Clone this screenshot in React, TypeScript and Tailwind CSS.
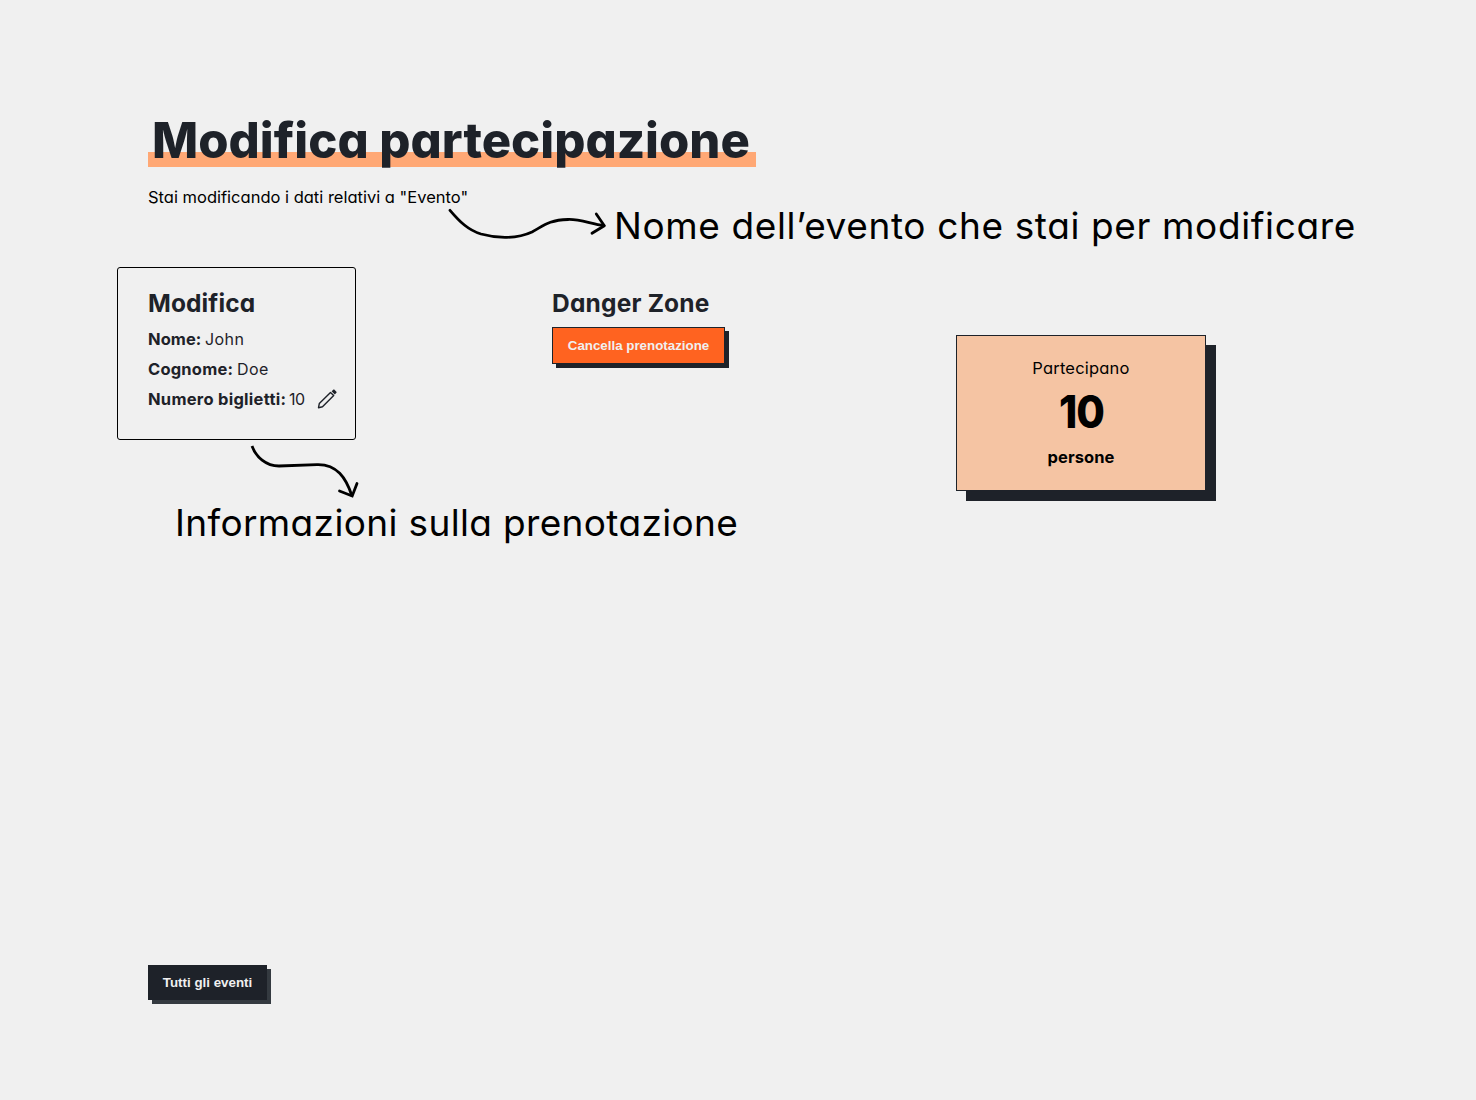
import type { ReactNode } from "react";

function Row({ label, labelClass, children }: { label: string; labelClass: string; children: ReactNode }) {
  return (
    <div className="flex h-6 items-center leading-6 text-[#1e2229]">
      <span className={labelClass}>{label}</span>
      {children}
    </div>
  );
}

function Pencil() {
  return (
    <svg width="20" height="20" viewBox="0 0 20 20" className="ml-[13px]" fill="none" stroke="#1e2229">
      <path
        d="M1.5 18.7L2.3 14.6L13.5 3.4L16.7 6.6L5.5 17.8L1.5 18.7Z"
        strokeWidth="1.4"
        strokeLinejoin="round"
      />
      <path
        d="M14.6 2.3L16 0.9C16.5 0.4 17.2 0.4 17.7 0.9L19.2 2.4C19.7 2.9 19.7 3.6 19.2 4.1L17.8 5.5Z"
        fill="#1e2229"
        stroke="none"
      />
    </svg>
  );
}

export default function App() {
  return (
    <div className="relative flex h-[1100px] w-[1476px] flex-col items-start overflow-hidden bg-[#f0f0f0] px-[148px] pt-[105px] pb-[100px] font-['Inter',sans-serif] text-base text-black [font-feature-settings:'cv11']">
      <h1 className="h-[72px] w-[608px] bg-[linear-gradient(#ffa875,#ffa875)] bg-[length:100%_15px] bg-[position:0_47px] bg-no-repeat pl-[4px] text-[49px] leading-[71px] font-extrabold whitespace-nowrap text-[#1e2229]">
        Modifica partecipazione
      </h1>
      <p className="mt-2 text-[16.5px] leading-6">Stai modificando i dati relativi a "Evento"</p>

      <main className="mt-[75px] grid grid-cols-[404px_404px_260px] items-start">
        <section>
          <h2 className="pt-px text-[24.5px] leading-9 font-bold tracking-[0.1px] text-[#1e2229]">Modifica</h2>
          <div className="mt-1.5 flex flex-col gap-1.5">
            <Row label="Nome:" labelClass="w-[57px] text-[16.5px] font-bold tracking-[0.05px]">
              <span className="tracking-[0.4px]">John</span>
            </Row>
            <Row label="Cognome:" labelClass="w-[89px] text-[16.5px] font-bold tracking-[0.2px]">
              <span className="tracking-[0.4px]">Doe</span>
            </Row>
            <Row label="Numero biglietti:" labelClass="w-[141px] text-[16.5px] font-bold tracking-[0.27px]">
              <span className="w-[15px] tracking-[-0.6px]">10</span>
              <Pencil />
            </Row>
          </div>
        </section>

        <section>
          <h2 className="pt-px text-[24.5px] leading-9 font-bold tracking-[0.2px] text-[#1e2229]">Danger Zone</h2>
          <button className="mt-1.5 flex h-[37px] w-[173px] items-center justify-center border border-[#1e2229] bg-[#ff6320] font-['Liberation_Sans',sans-serif] text-[13.333px] leading-none font-bold whitespace-nowrap text-[#f0f0f0] shadow-[4px_4px_0_#1e2229]">
            Cancella prenotazione
          </button>
        </section>

        <section className="mt-[51px] flex h-[156px] w-[250px] flex-col items-center border border-[#1e2229] bg-[#f5c4a3] pt-5 shadow-[10px_10px_0_#1e2229]">
          <span className="text-[16.5px] leading-6 tracking-[0.2px]">Partecipano</span>
          <strong className="scale-x-[0.92] text-[45px] leading-[64px] font-extrabold tracking-[-1px]">10</strong>
          <strong className="mt-px text-[16.5px] leading-6 font-bold tracking-[0.05px]">persone</strong>
        </section>
      </main>

      <button className="mt-auto flex h-[35px] w-[119px] items-center justify-center bg-[#1e2229] font-['Liberation_Sans',sans-serif] text-[13.333px] leading-none font-bold whitespace-nowrap text-[#f0f0f0] shadow-[4px_4px_0_#343a40]">
        Tutti gli eventi
      </button>

      <div className="pointer-events-none absolute top-[267px] left-[117px] h-[173px] w-[239px] rounded-[3px] border border-black" />
      <svg
        className="pointer-events-none absolute top-[200px] left-[440px]"
        width="180"
        height="50"
        viewBox="440 200 180 50"
        fill="none"
        stroke="black"
        strokeWidth="2.8"
        strokeLinecap="round"
        strokeLinejoin="round"
      >
        <path d="M450 210.300C460 222 468 230 481 234C497 238.500 517 239 532 232C544 225.500 549 220 568 219.500C579 219 590 223.500 604 225.700" />
        <path d="M596.300 214L604.300 225.700L592 233.200" />
      </svg>
      <svg
        className="pointer-events-none absolute top-[440px] left-[245px]"
        width="120"
        height="60"
        viewBox="245 440 120 60"
        fill="none"
        stroke="black"
        strokeWidth="2.8"
      >
        <path d="M252 446C256 457 266 466 279 466L317 464.600C337 464 346 478 352 496" />
        <path d="M339.500 491L352.200 496L357 483.500" strokeLinecap="round" />
      </svg>
      <span className="absolute top-[202px] left-[614px] text-[37px] leading-[48px] tracking-[0.62px] whitespace-nowrap">
        Nome dell’evento che stai per modificare
      </span>
      <span className="absolute top-[499px] left-[175px] text-[37px] leading-[48px] tracking-[0.35px] whitespace-nowrap">
        Informazioni sulla prenotazione
      </span>
    </div>
  );
}
